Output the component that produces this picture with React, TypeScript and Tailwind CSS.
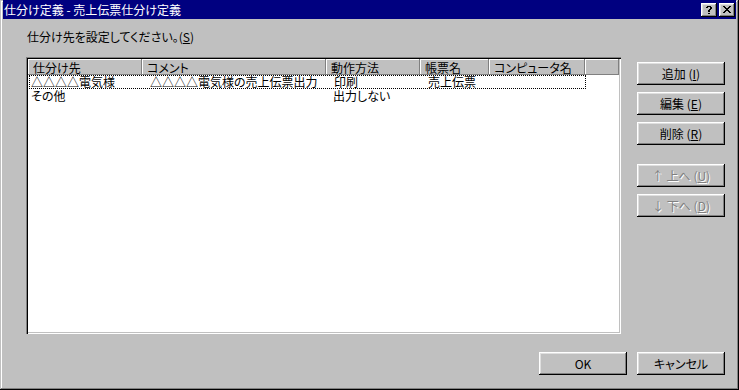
import React from "react";

const raised =
  "shadow-[inset_-1px_-1px_#000,inset_1px_1px_#fff,inset_-2px_-2px_#808080,inset_2px_2px_#dfdfdf]";

function Btn({ children, disabled }: { children: React.ReactNode; disabled?: boolean }) {
  return (
    <div
      className={`h-[23px] w-[88px] flex items-center justify-center bg-[#c0c0c0] ${raised} ${
        disabled ? "text-[#808080] [text-shadow:1px_1px_0_#fff]" : "text-black"
      }`}
    >
      <span className="leading-[14px] whitespace-pre">{children}</span>
    </div>
  );
}

function HelpGlyph() {
  const px = [
    [1, 0], [2, 0], [3, 0], [4, 0],
    [0, 1], [1, 1], [4, 1], [5, 1],
    [4, 2], [5, 2],
    [3, 3], [4, 3],
    [2, 4], [3, 4],
    [2, 5], [3, 5],
    [2, 7], [3, 7],
  ];
  return (
    <svg width="6" height="8" viewBox="0 0 6 8" shapeRendering="crispEdges">
      {px.map(([x, y], i) => (
        <rect key={i} x={x} y={y} width="1" height="1" fill="#000" />
      ))}
    </svg>
  );
}

function CloseGlyph() {
  const rows = ["xx....xx", ".xx..xx.", "..xxxx..", "...xx...", "..xxxx..", ".xx..xx.", "xx....xx"];
  const px: [number, number][] = [];
  rows.forEach((r, y) => r.split("").forEach((c, x) => c === "x" && px.push([x, y])));
  return (
    <svg width="8" height="7" viewBox="0 0 8 7" shapeRendering="crispEdges">
      {px.map(([x, y], i) => (
        <rect key={i} x={x} y={y} width="1" height="1" fill="#000" />
      ))}
    </svg>
  );
}

const cols = [
  { label: "仕分け先", w: "w-[114px]" },
  { label: "コメント", w: "w-[184px]" },
  { label: "動作方法", w: "w-[94px]" },
  { label: "帳票名", w: "w-[69px]" },
  { label: "コンピュータ名", w: "w-[96px]" },
];

export default function App() {
  return (
    <div className="w-[739px] h-[390px] bg-[#c0c0c0] flex flex-col px-[3px] pb-[3px] overflow-hidden shadow-[inset_-1px_-1px_#000,inset_1px_1px_#c0c0c0,inset_-2px_-2px_#808080,inset_2px_2px_#fff] font-['Noto_Sans_CJK_JP','Noto_Sans',sans-serif] text-[12px] [font-feature-settings:'palt'] text-black">
      {/* Title bar */}
      <div className="h-[19px] bg-[#000080] text-white flex items-center pl-[1px] pr-[1px] shrink-0">
        <span className="leading-[14px] whitespace-pre">仕分け定義 - 売上伝票仕分け定義</span>
        <div className="ml-auto flex items-center gap-[2px]">
          <div className={`w-[16px] h-[14px] bg-[#c0c0c0] flex items-center justify-center ${raised}`}>
            <HelpGlyph />
          </div>
          <div className={`w-[16px] h-[14px] bg-[#c0c0c0] flex items-center justify-center ${raised}`}>
            <CloseGlyph />
          </div>
        </div>
      </div>

      {/* Body */}
      <div className="flex-1 flex flex-col pl-[23px] pr-[11px]">
        <div className="mt-[11px] h-[14px] leading-[14px] pl-[1px] whitespace-pre">
          仕分け先を設定してください。(<span className="underline">S</span>)
        </div>

        <div className="mt-[13px] flex gap-[16px]">
          {/* List */}
          <div className="w-[595px] h-[277px] bg-white p-[2px] shadow-[inset_1px_1px_#808080,inset_2px_2px_#000,inset_-1px_-1px_#fff,inset_-2px_-2px_#c0c0c0]">
            <div className="flex h-[16px] bg-[#c0c0c0]">
              {cols.map((c) => (
                <div
                  key={c.label}
                  className={`${c.w} h-full pl-[5px] flex items-center shadow-[inset_-1px_-1px_#808080,inset_1px_1px_#fff] whitespace-nowrap`}
                >
                  <span className="leading-[13px]">{c.label}</span>
                </div>
              ))}
              <div className="flex-1 h-full shadow-[inset_-1px_-1px_#808080,inset_1px_1px_#fff]" />
            </div>
            <div className="flex h-[14px] w-[557px] ml-[1px] border border-dotted border-black items-center leading-[12px] whitespace-nowrap">
              <div className="w-[113px] pl-[1px]">△△△△電気様</div>
              <div className="w-[184px] pl-[7px]">△△△△電気様の売上伝票出力</div>
              <div className="w-[94px] pl-[7px]">印刷</div>
              <div className="w-[69px] pl-[7px]">売上伝票</div>
            </div>
            <div className="flex h-[14px] items-center leading-[12px] whitespace-nowrap">
              <div className="w-[114px] pl-[3px]">その他</div>
              <div className="w-[184px] pl-[7px]"></div>
              <div className="w-[94px] pl-[7px]">出力しない</div>
            </div>
          </div>

          {/* Side buttons */}
          <div className="mt-[5px] flex flex-col w-[88px]">
            <div className="flex flex-col gap-[7px]">
              <Btn>
                追加 (<span className="underline">I</span>)
              </Btn>
              <Btn>
                編集 (<span className="underline">E</span>)
              </Btn>
              <Btn>
                削除 (<span className="underline">R</span>)
              </Btn>
            </div>
            <div className="mt-[19px] flex flex-col gap-[7px]">
              <Btn disabled>
                ↑ 上へ (<span className="underline">U</span>)
              </Btn>
              <Btn disabled>
                ↓ 下へ (<span className="underline">D</span>)
              </Btn>
            </div>
          </div>
        </div>

        <div className="mt-[18px] flex justify-end gap-[10px]">
          <Btn>OK</Btn>
          <Btn>キャンセル</Btn>
        </div>
      </div>
    </div>
  );
}
